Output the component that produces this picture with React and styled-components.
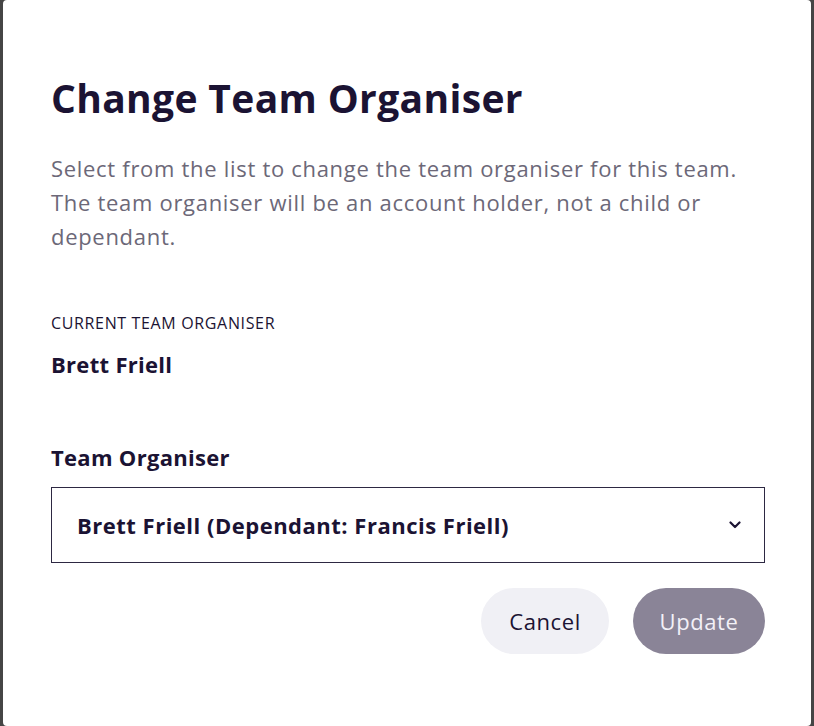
import React, { useState } from "react";
import styled, { createGlobalStyle } from "styled-components";

const GlobalStyle = createGlobalStyle`
  * { box-sizing: border-box; }
  html, body {
    margin: 0;
    padding: 0;
    height: 100%;
    background: #454545;
    font-family: "Open Sans", "Liberation Sans", sans-serif;
  }
`;

const options = [
  "Brett Friell (Dependant: Francis Friell)",
  "Brett Friell",
];

const Modal = styled.div`
  margin: 0 3px;
  height: 726px;
  background: #ffffff;
  border-radius: 4px;
  padding: 74px 46px 0 48px;
  color: #1b1333;
`;

const Title = styled.h1`
  margin: 0;
  font-size: 39px;
  font-weight: 700;
  line-height: 48px;
  letter-spacing: 0.35px;
`;

const Description = styled.p`
  margin: 29px 0 0;
  font-size: 22px;
  line-height: 34px;
  color: #6c6878;
  letter-spacing: 0.7px;
  max-width: 700px;
`;

const Caption = styled.div`
  margin-top: 60px;
  font-size: 16px;
  line-height: 20px;
  letter-spacing: 0.65px;
`;

const Name = styled.div`
  margin-top: 19px;
  font-size: 22px;
  font-weight: 700;
  line-height: 24px;
  letter-spacing: 0.3px;
`;

const Label = styled.label`
  display: block;
  margin-top: 69px;
  font-size: 22px;
  font-weight: 700;
  line-height: 24px;
  letter-spacing: 0.3px;
`;

const SelectWrap = styled.div`
  position: relative;
  margin-top: 18px;
`;

const Select = styled.select`
  appearance: none;
  width: 100%;
  height: 76px;
  border: 1px solid #2d2842;
  border-radius: 0;
  background: #fff;
  padding: 0 60px 0 25px;
  font-family: inherit;
  font-size: 22px;
  font-weight: 700;
  color: #1b1333;
  letter-spacing: 0.5px;
  outline: none;
`;

const Chevron = styled.svg`
  position: absolute;
  right: 24px;
  top: 50%;
  transform: translateY(-50%);
  pointer-events: none;
`;

const Actions = styled.div`
  display: flex;
  justify-content: flex-end;
  gap: 24px;
  margin-top: 25px;
`;

const Button = styled.button`
  height: 66px;
  min-width: ${(p) => (p.$primary ? "132px" : "128px")};
  padding: 0 26px;
  border: none;
  border-radius: 33px;
  font-family: inherit;
  font-size: 22px;
  letter-spacing: 0.6px;
  background: ${(p) => (p.$primary ? "#8a8497" : "#f0f0f5")};
  color: ${(p) => (p.$primary ? "#f3f1f7" : "#1b1333")};
  cursor: ${(p) => (p.$primary ? "default" : "pointer")};
`;

export default function App() {
  const [value, setValue] = useState(options[0]);
  return (
    <>
      <GlobalStyle />
      <Modal>
        <Title>Change Team Organiser</Title>
        <Description>
          Select from the list to change the team organiser for this team. The
          team organiser will be an account holder, not a child or dependant.
        </Description>
        <Caption>CURRENT TEAM ORGANISER</Caption>
        <Name>Brett Friell</Name>
        <Label htmlFor="organiser">Team Organiser</Label>
        <SelectWrap>
          <Select
            id="organiser"
            value={value}
            onChange={(e) => setValue(e.target.value)}
          >
            {options.map((o) => (
              <option key={o}>{o}</option>
            ))}
          </Select>
          <Chevron width="12" height="8" viewBox="0 0 12 8">
            <path
              d="M1.5 1.5 L6 6 L10.5 1.5"
              fill="none"
              stroke="#1b1333"
              strokeWidth="2.2"
              strokeLinecap="round"
              strokeLinejoin="round"
            />
          </Chevron>
        </SelectWrap>
        <Actions>
          <Button>Cancel</Button>
          <Button $primary disabled>
            Update
          </Button>
        </Actions>
      </Modal>
    </>
  );
}
